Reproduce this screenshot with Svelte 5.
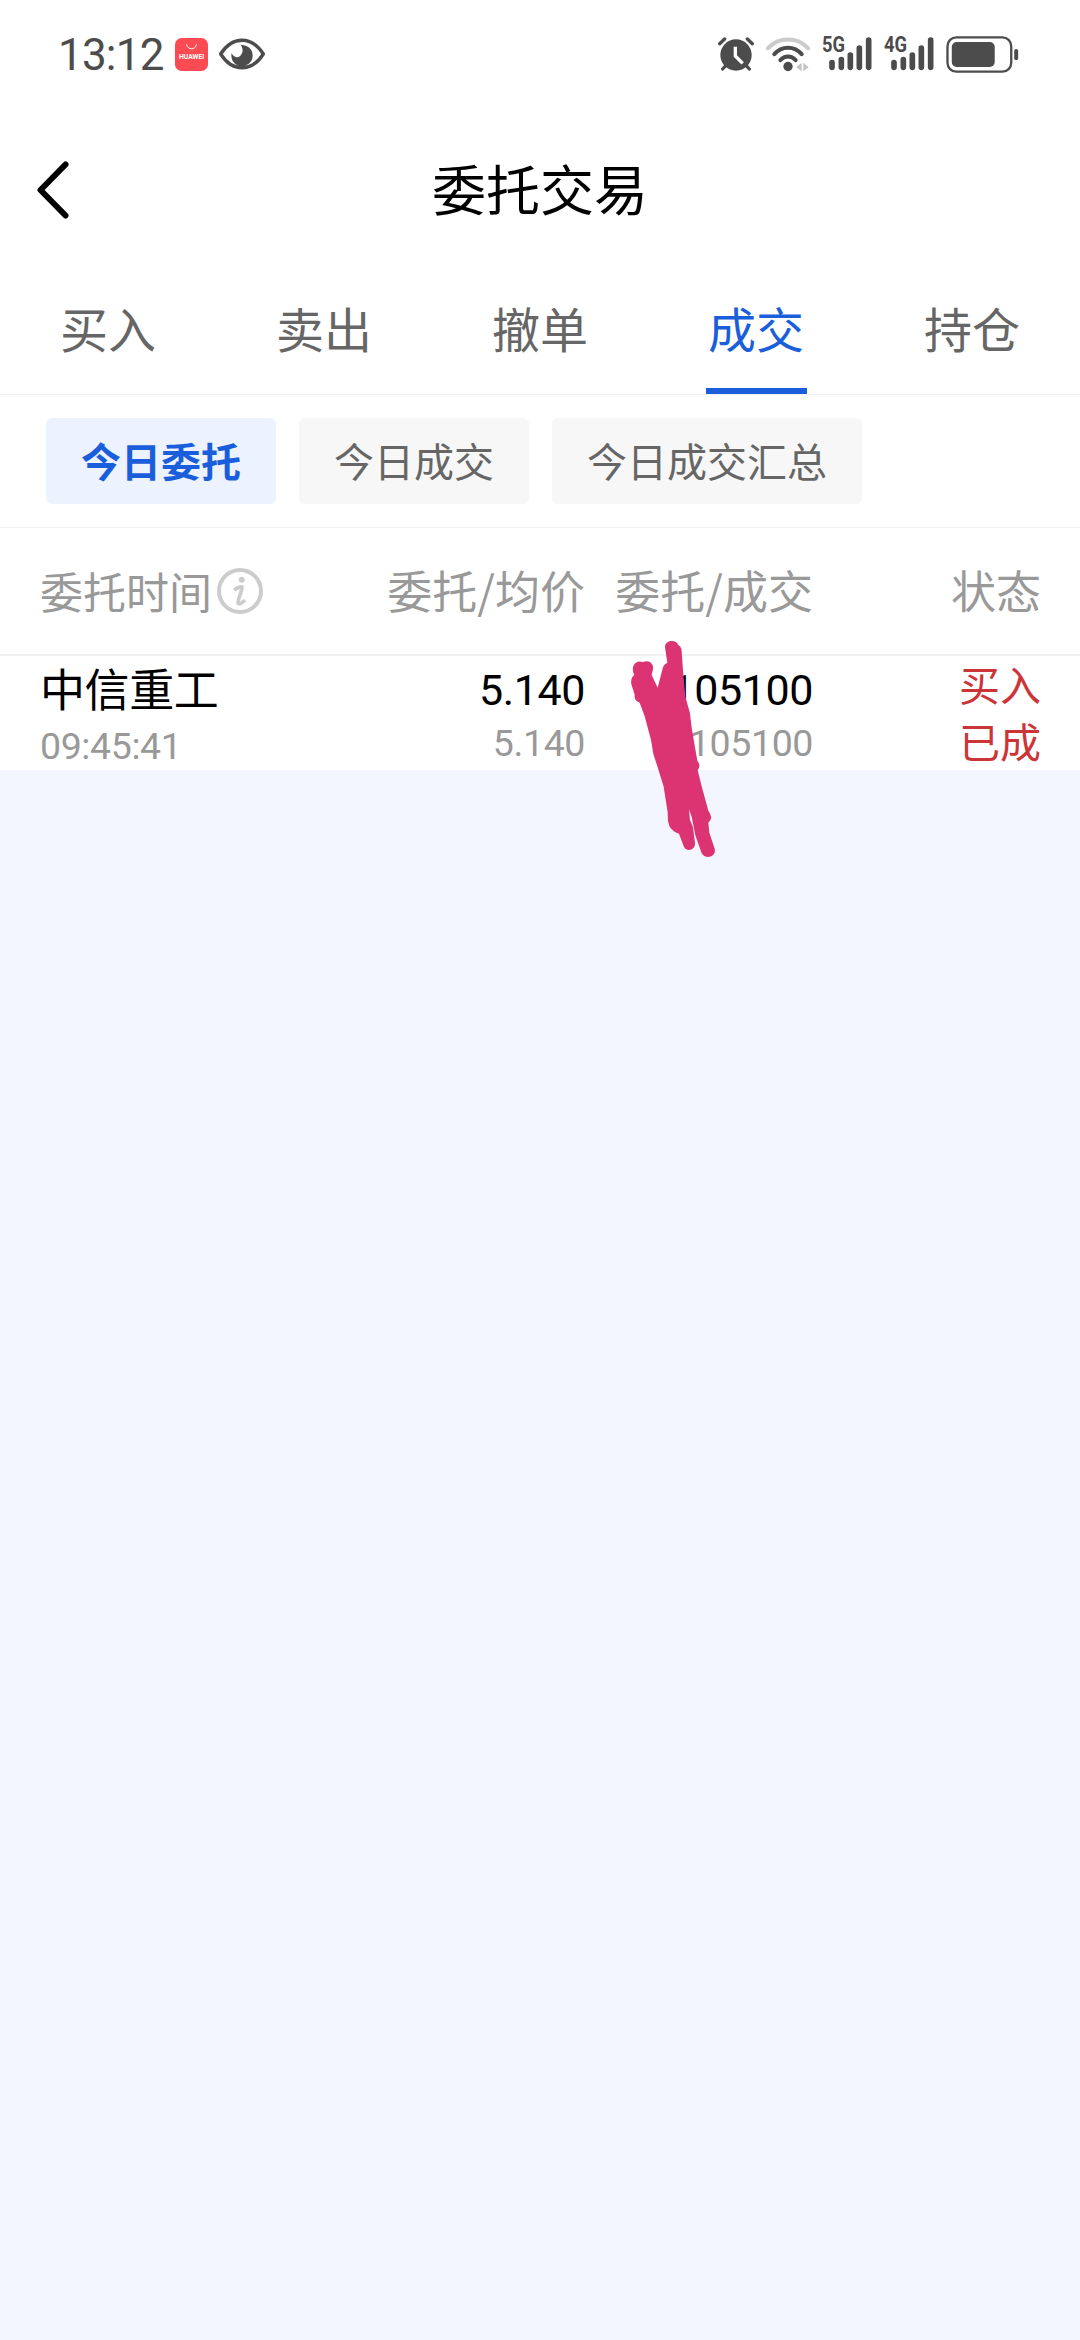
<script lang="ts">
	const tabs = ['买入', '卖出', '撤单', '成交', '持仓'];
	const filters = ['今日委托', '今日成交', '今日成交汇总'];
	const orders = [
		{
			name: '中信重工',
			time: '09:45:41',
			price: '5.140',
			avgPrice: '5.140',
			amount: '105100',
			filled: '105100',
			side: '买入',
			status: '已成'
		}
	];

	let activeTab = $state('成交');
	let activeFilter = $state('今日委托');
</script>

{#snippet signal(label: string)}
	<svg class="signal" viewBox="0 -24 153 156">
		<text x="0" y="47" font-size="66" textLength="69" lengthAdjust="spacingAndGlyphs">{label}</text>
		<g stroke="#4c4c4c" stroke-width="17" stroke-linecap="round">
			<path d="M30 80v14M58 71v23M85 57v37M112 36v58M140 12v82" />
		</g>
	</svg>
{/snippet}

<main>
	<div class="status">
		<span class="clock">13:12</span>
		<svg class="store" viewBox="0 0 100 100">
			<rect width="100" height="100" rx="20" fill="#fd4a53" />
			<path d="M35 19c2 18 28 18 30 0" fill="none" stroke="#fff" stroke-width="3" />
			<text x="12" y="64" font-size="19" textLength="77" lengthAdjust="spacingAndGlyphs">HUAWEI</text>
		</svg>
		<svg class="eye" viewBox="0 0 138 96">
			<path
				d="M5 48C40-7 98-7 133 48 98 103 40 103 5 48z"
				fill="none"
				stroke="#4c4c4c"
				stroke-width="10"
			/>
			<path d="M65 21a32 32 0 1 1-27 24c4 13 18 16 26 8 9-8 9-22 1-32z" fill="#4c4c4c" />
		</svg>

		<div class="right">
			<svg class="alarm" viewBox="0 0 108 102">
				<g stroke="#4c4c4c" stroke-width="10" stroke-linecap="round" fill="none">
					<path d="M5 20 20 6M88 6l15 14M24 85 14 96M84 85l10 11" />
				</g>
				<circle cx="54" cy="54" r="47" fill="#4c4c4c" />
				<path d="M52 29v28l22 22" fill="none" stroke="#fff" stroke-width="10" />
			</svg>
			<svg class="wifi" viewBox="0 0 132 104">
				<g fill="none" stroke-linecap="round" stroke-width="12">
					<path d="M6 33C38-2 94-2 126 33" stroke="#cbcbcb" />
					<path d="M25 51c22-26 60-26 82 0" stroke="#4c4c4c" />
					<path d="M43 69c13-15 33-15 46 0" stroke="#4c4c4c" />
				</g>
				<circle cx="66" cy="88" r="14" fill="#4c4c4c" />
				<path d="M91 90l16-13v25zM112 77l16 13-16 12z" fill="#c4c4c4" />
			</svg>
			{@render signal('5G')}
			{@render signal('4G')}
			<svg class="battery" viewBox="0 0 220 112">
				<rect x="4" y="4" width="193" height="104" rx="27" fill="none" stroke="#4c4c4c" stroke-width="7" />
				<rect x="17" y="18" width="130" height="76" rx="15" fill="#4c4c4c" />
				<rect x="206" y="39" width="12" height="34" rx="6" fill="#4c4c4c" />
			</svg>
		</div>
	</div>

	<header>
		<button class="back" aria-label="返回">
			<svg viewBox="0 0 32 58">
				<path
					d="M28.500 3.500 3.500 29l25 25.500"
					fill="none"
					stroke="#000"
					stroke-width="6"
					stroke-linecap="round"
					stroke-linejoin="round"
				/>
			</svg>
		</button>
		<h1>委托交易</h1>
	</header>

	<nav>
		{#each tabs as tab}
			<button class:active={tab === activeTab} onclick={() => (activeTab = tab)}>
				<span>{tab}</span>
			</button>
		{/each}
	</nav>

	<div class="filters">
		{#each filters as filter}
			<button class:active={filter === activeFilter} onclick={() => (activeFilter = filter)}>
				{filter}
			</button>
		{/each}
	</div>

	<div class="grid head">
		<div class="time-head">
			<span>委托时间</span>
			<svg viewBox="0 0 46 46">
				<circle cx="23" cy="23" r="21" fill="none" stroke="#ccc" stroke-width="4" />
				<circle cx="24.700" cy="11.700" r="3" fill="#ccc" />
				<path
					d="M17 22c3-2 6-4 8-3 1 1-5 15-4 16 1 2 4 0 7-3"
					fill="none"
					stroke="#ccc"
					stroke-width="3.800"
				/>
			</svg>
		</div>
		<span>委托/均价</span>
		<span>委托/成交</span>
		<span>状态</span>
	</div>

	{#each orders as order}
		<div class="grid row">
			<div class="name">
				<p>{order.name}</p>
				<small>{order.time}</small>
			</div>
			<div>
				<p>{order.price}</p>
				<small>{order.avgPrice}</small>
			</div>
			<div>
				<p>{order.amount}</p>
				<small>{order.filled}</small>
			</div>
			<div class="state">
				<span>{order.side}</span>
				<span>{order.status}</span>
			</div>
		</div>
	{/each}

	<svg class="scribble" viewBox="0 0 720 750">
		<path
			d="M195 82C194 58 231 58 234 74Q245 80 245 94L249 150 256 230 270 280 275 324 292 422Q304 436 293 451L304 495 325 572Q342 595 325 608L328 638 344 686C350 712 315 719 305 700L286 646 275 590 267 568 270 600 279 622 285 670C286 690 261 697 252 681L237 641Q209 634 204 604L203 577 191 500 173 442 160 402 153 360 134 289 119 248Q101 242 104 224L94 193Q91 173 103 165C89 137 111 118 128 127 146 117 162 131 159 147L155 165 173 203 187 149Q190 132 202 129z"
			fill="#dc3373"
		/>
	</svg>
</main>

<style>
	:global(body) {
		margin: 0;
		background-color: #f3f6fe;
	}
	main {
		position: relative;
		min-height: 2340px;
		background-color: #f3f6fe;
		font-family: Roboto, 'Noto Sans CJK SC', sans-serif;
	}
	svg {
		display: block;
		flex: none;
	}
	button {
		padding: 0;
		border: none;
		background: none;
		font: inherit;
		cursor: pointer;
	}

	.status {
		display: flex;
		align-items: center;
		height: 108px;
		padding: 0 61px 0 58px;
		box-sizing: border-box;
		background-color: #fff;
	}
	.clock {
		width: 117px;
		padding-top: 2px;
		font-size: 44px;
		line-height: 50px;
		letter-spacing: -0.8px;
		color: #4c4c4c;
	}
	.store {
		width: 33px;
		height: 33px;
	}
	.store text {
		fill: #fff;
		font-family: Roboto, sans-serif;
		font-weight: 700;
	}
	.eye {
		width: 46px;
		height: 32px;
		margin-left: 11px;
	}
	.right {
		display: flex;
		align-items: center;
		margin-left: auto;
	}
	.alarm {
		width: 36px;
		height: 34px;
	}
	.wifi {
		width: 44px;
		height: 35px;
		margin: 0 12px;
	}
	.signal {
		width: 51px;
		height: 52px;
		margin-right: 11px;
	}
	.signal text {
		fill: #4c4c4c;
		font-family: Roboto, sans-serif;
		font-weight: 700;
	}
	.battery {
		width: 73px;
		height: 37px;
	}

	header {
		display: grid;
		grid-template-columns: 100px 1fr 100px;
		align-items: center;
		height: 164px;
		background-color: #fff;
	}
	.back {
		padding-left: 37px;
	}
	.back svg {
		width: 32px;
		height: 58px;
	}
	h1 {
		margin: 0;
		padding-top: 6px;
		text-align: center;
		font-size: 54px;
		font-weight: 400;
		line-height: 60px;
		color: #000;
	}

	nav {
		display: flex;
		height: 122px;
		border-bottom: 1px solid #f0f0f0;
		background-color: #fff;
	}
	nav button {
		display: flex;
		flex: 1;
		justify-content: center;
		font-size: 48px;
		line-height: 120px;
		color: #666;
	}
	nav span {
		width: 101px;
		height: 116px;
		border-bottom: 6px solid transparent;
	}
	nav .active {
		color: #1b5edb;
	}
	nav .active span {
		border-color: #1b5edb;
	}

	.filters {
		display: flex;
		gap: 23px;
		padding: 23px 46px;
		border-bottom: 1px solid #f0f0f0;
		background-color: #fff;
	}
	.filters button {
		height: 86px;
		padding: 0 35px 2px;
		border-radius: 6px;
		background-color: #f7f7f7;
		font-size: 40px;
		color: #666;
	}
	.filters .active {
		background-color: #ecf2fe;
		font-weight: 700;
		color: #1b5edb;
	}

	.grid {
		display: grid;
		grid-template-columns: 1fr 200px 228px 228px;
		padding: 0 39px 0 40px;
		text-align: right;
		background-color: #fff;
	}
	.head {
		align-items: center;
		height: 126px;
		border-bottom: 2px solid #f0f1f3;
		font-family: 'Noto Sans CJK SC', sans-serif;
		font-size: 45px;
		line-height: 60px;
		color: #999;
	}
	.head span {
		padding-bottom: 3px;
	}
	.time-head {
		display: flex;
		align-items: center;
		gap: 5px;
		font-size: 43px;
	}
	.time-head svg {
		width: 46px;
		height: 46px;
	}

	.row {
		height: 114px;
	}
	.row p {
		margin: 8px 0 0;
		font-size: 43px;
		line-height: 52px;
		letter-spacing: -0.4px;
		color: #000;
	}
	.row small {
		display: block;
		font-size: 37.500px;
		line-height: 54px;
		letter-spacing: -0.4px;
		color: #999;
	}
	.row .name {
		text-align: left;
	}
	.name p {
		margin-top: 10px;
		font-size: 45px;
	}
	.name small {
		padding-top: 1px;
	}
	.state {
		display: flex;
		flex-direction: column;
		padding-top: 3px;
		font-size: 41px;
		line-height: 57px;
		color: #cc3537;
	}

	/* marker stroke over the order amount */
	.scribble {
		position: absolute;
		left: 600px;
		top: 620px;
		width: 240px;
		height: 250px;
	}
</style>
